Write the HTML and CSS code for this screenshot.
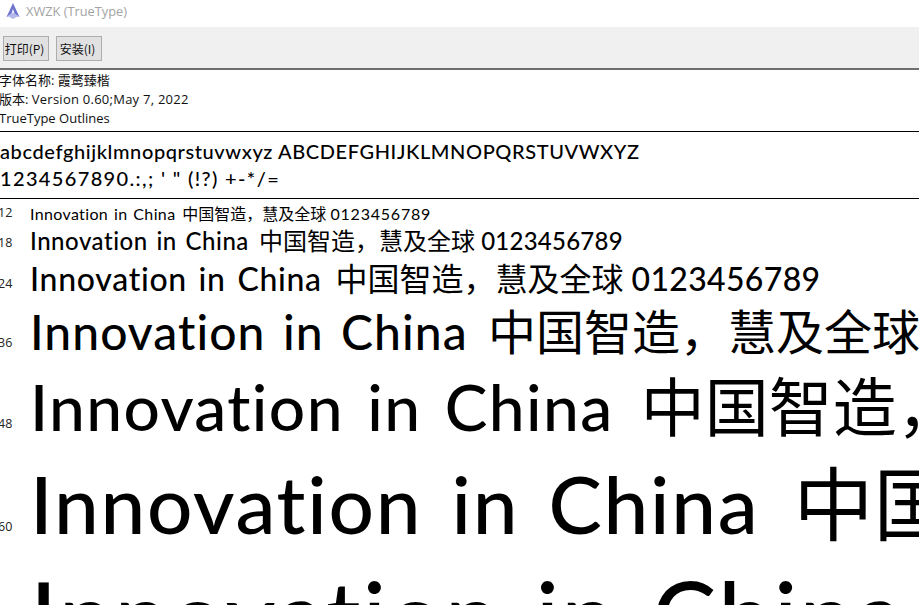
FILE: index.html
```html
<!DOCTYPE html>
<html lang="zh">
<head>
<meta charset="utf-8">
<title>XWZK (TrueType)</title>
<link rel="stylesheet" href="styles.css">
</head>
<body>
<header class="titlebar">
<svg class="logo" width="18" height="18" viewBox="0 0 18 18"><path d="M10 1 L16.500 15 L12 13 L10 7 L8 13 L3.500 15 Z" fill="#6f74cf"/><path d="M4.500 14 L10 10.500 L15.500 14 L10 17 Z" fill="#b4b8ea"/></svg>
<span class="title">XWZK (TrueType)</span>
</header>
<nav class="toolbar">
<button class="btn">打印(P)</button>
<button class="btn">安装(I)</button>
</nav>
<section class="info">
<div>字体名称: 霞鹜臻楷</div>
<div>版本: <span class="ver">Version 0.60;May 7, 2022</span></div>
<div>TrueType Outlines</div>
</section>
<section class="chars">
<div class="letters">abcdefghijklmnopqrstuvwxyz ABCDEFGHIJKLMNOPQRSTUVWXYZ</div>
<div class="digits">1234567890.:,; ' " (!?) +-*/=</div>
</section>
<main class="samples">
<div class="row r12"><span class="size">12</span><span class="text"><span class="lat">Innovation in China </span>中国智造，慧及全球 <span class="num">0123456789</span></span></div>
<div class="row r18"><span class="size">18</span><span class="text"><span class="lat">Innovation in China </span>中国智造，慧及全球 <span class="num">0123456789</span></span></div>
<div class="row r24"><span class="size">24</span><span class="text"><span class="lat">Innovation in China </span>中国智造，慧及全球 <span class="num">0123456789</span></span></div>
<div class="row r36"><span class="size">36</span><span class="text"><span class="lat">Innovation in China </span>中国智造，慧及全球 <span class="num">0123456789</span></span></div>
<div class="row r48"><span class="size">48</span><span class="text"><span class="lat">Innovation in China </span>中国智造，慧及全球 <span class="num">0123456789</span></span></div>
<div class="row r60"><span class="size">60</span><span class="text"><span class="lat">Innovation in China </span>中国智造，慧及全球 <span class="num">0123456789</span></span></div>
<div class="row r72"><span class="size">72</span><span class="text"><span class="lat">Innovation in China </span>中国智造，慧及全球 <span class="num">0123456789</span></span></div>
</main>
</body>
</html>
```
FILE: styles.css
```css
html, body { margin: 0; padding: 0; height: 100%; overflow: hidden; background: #fff; }
body { font-family: "Open Sans", "Noto Sans CJK SC", sans-serif; color: #000; width: 919px; height: 605px; }
.titlebar { height: 27px; display: flex; align-items: center; gap: 5px; padding-left: 3px; background: #fff; box-sizing: border-box; padding-bottom: 5px; }
.title { font: 12.8px "Open Sans", sans-serif; color: #a3a3a3; }
.toolbar { height: 43px; box-sizing: border-box; background: #f0f0f0; border-bottom: 2px solid #6e6e6e; display: flex; align-items: flex-start; gap: 7px; padding: 9px 0 0 3px; }
.btn { width: 46px; height: 25px; padding: 0 3px 0 0; font: 12px "Noto Sans CJK SC", sans-serif; background: #e1e1e1; border: 1px solid #adadad; color: #111; white-space: nowrap; }
.info { height: 62px; box-sizing: border-box; padding-top: 1px; margin-left: -1px; border-bottom: 1px solid #000; font: 13px/19.2px "Open Sans", "Noto Sans CJK SC", sans-serif; white-space: nowrap; color: #111; }
.ver { letter-spacing: .25px; }
.chars { height: 67px; box-sizing: border-box; border-bottom: 1px solid #000; padding-top: 6px; font-size: 20px; line-height: 27px; white-space: nowrap; font-family: "Lato", "Noto Sans CJK SC", sans-serif; font-weight: 500; }
.letters { letter-spacing: .6px; }
.digits { letter-spacing: 1.35px; }
.samples { overflow: hidden; }
.row { display: flex; align-items: baseline; white-space: nowrap; }
.size { width: 32px; margin-left: -2px; flex: none; font: 12.5px "Open Sans", sans-serif; color: #222; position: relative; top: -3px; }
.text { font-family: "Lato", "Noto Sans CJK SC", sans-serif; }
.lat { font-weight: 500; letter-spacing: .022em; word-spacing: .09em; padding-right: .06em; white-space: pre; }
.num { font-weight: 500; letter-spacing: .01em; }
.r12 .lat, .r12 .num { font-weight: 400; }
.r12 .num { letter-spacing: .8px; }
.r12 { padding-top: 5px; font-size: 16px; line-height: 20px; }
.r18 { font-size: 24px; line-height: 34px; }
.r24 { font-size: 32px; line-height: 42px; }
.r36 { font-size: 48px; line-height: 64px; }
.r48 { font-size: 64px; line-height: 86px; }
.r60 { font-size: 80px; line-height: 106px; }
.r72 { font-size: 96px; line-height: 118px; }
```
